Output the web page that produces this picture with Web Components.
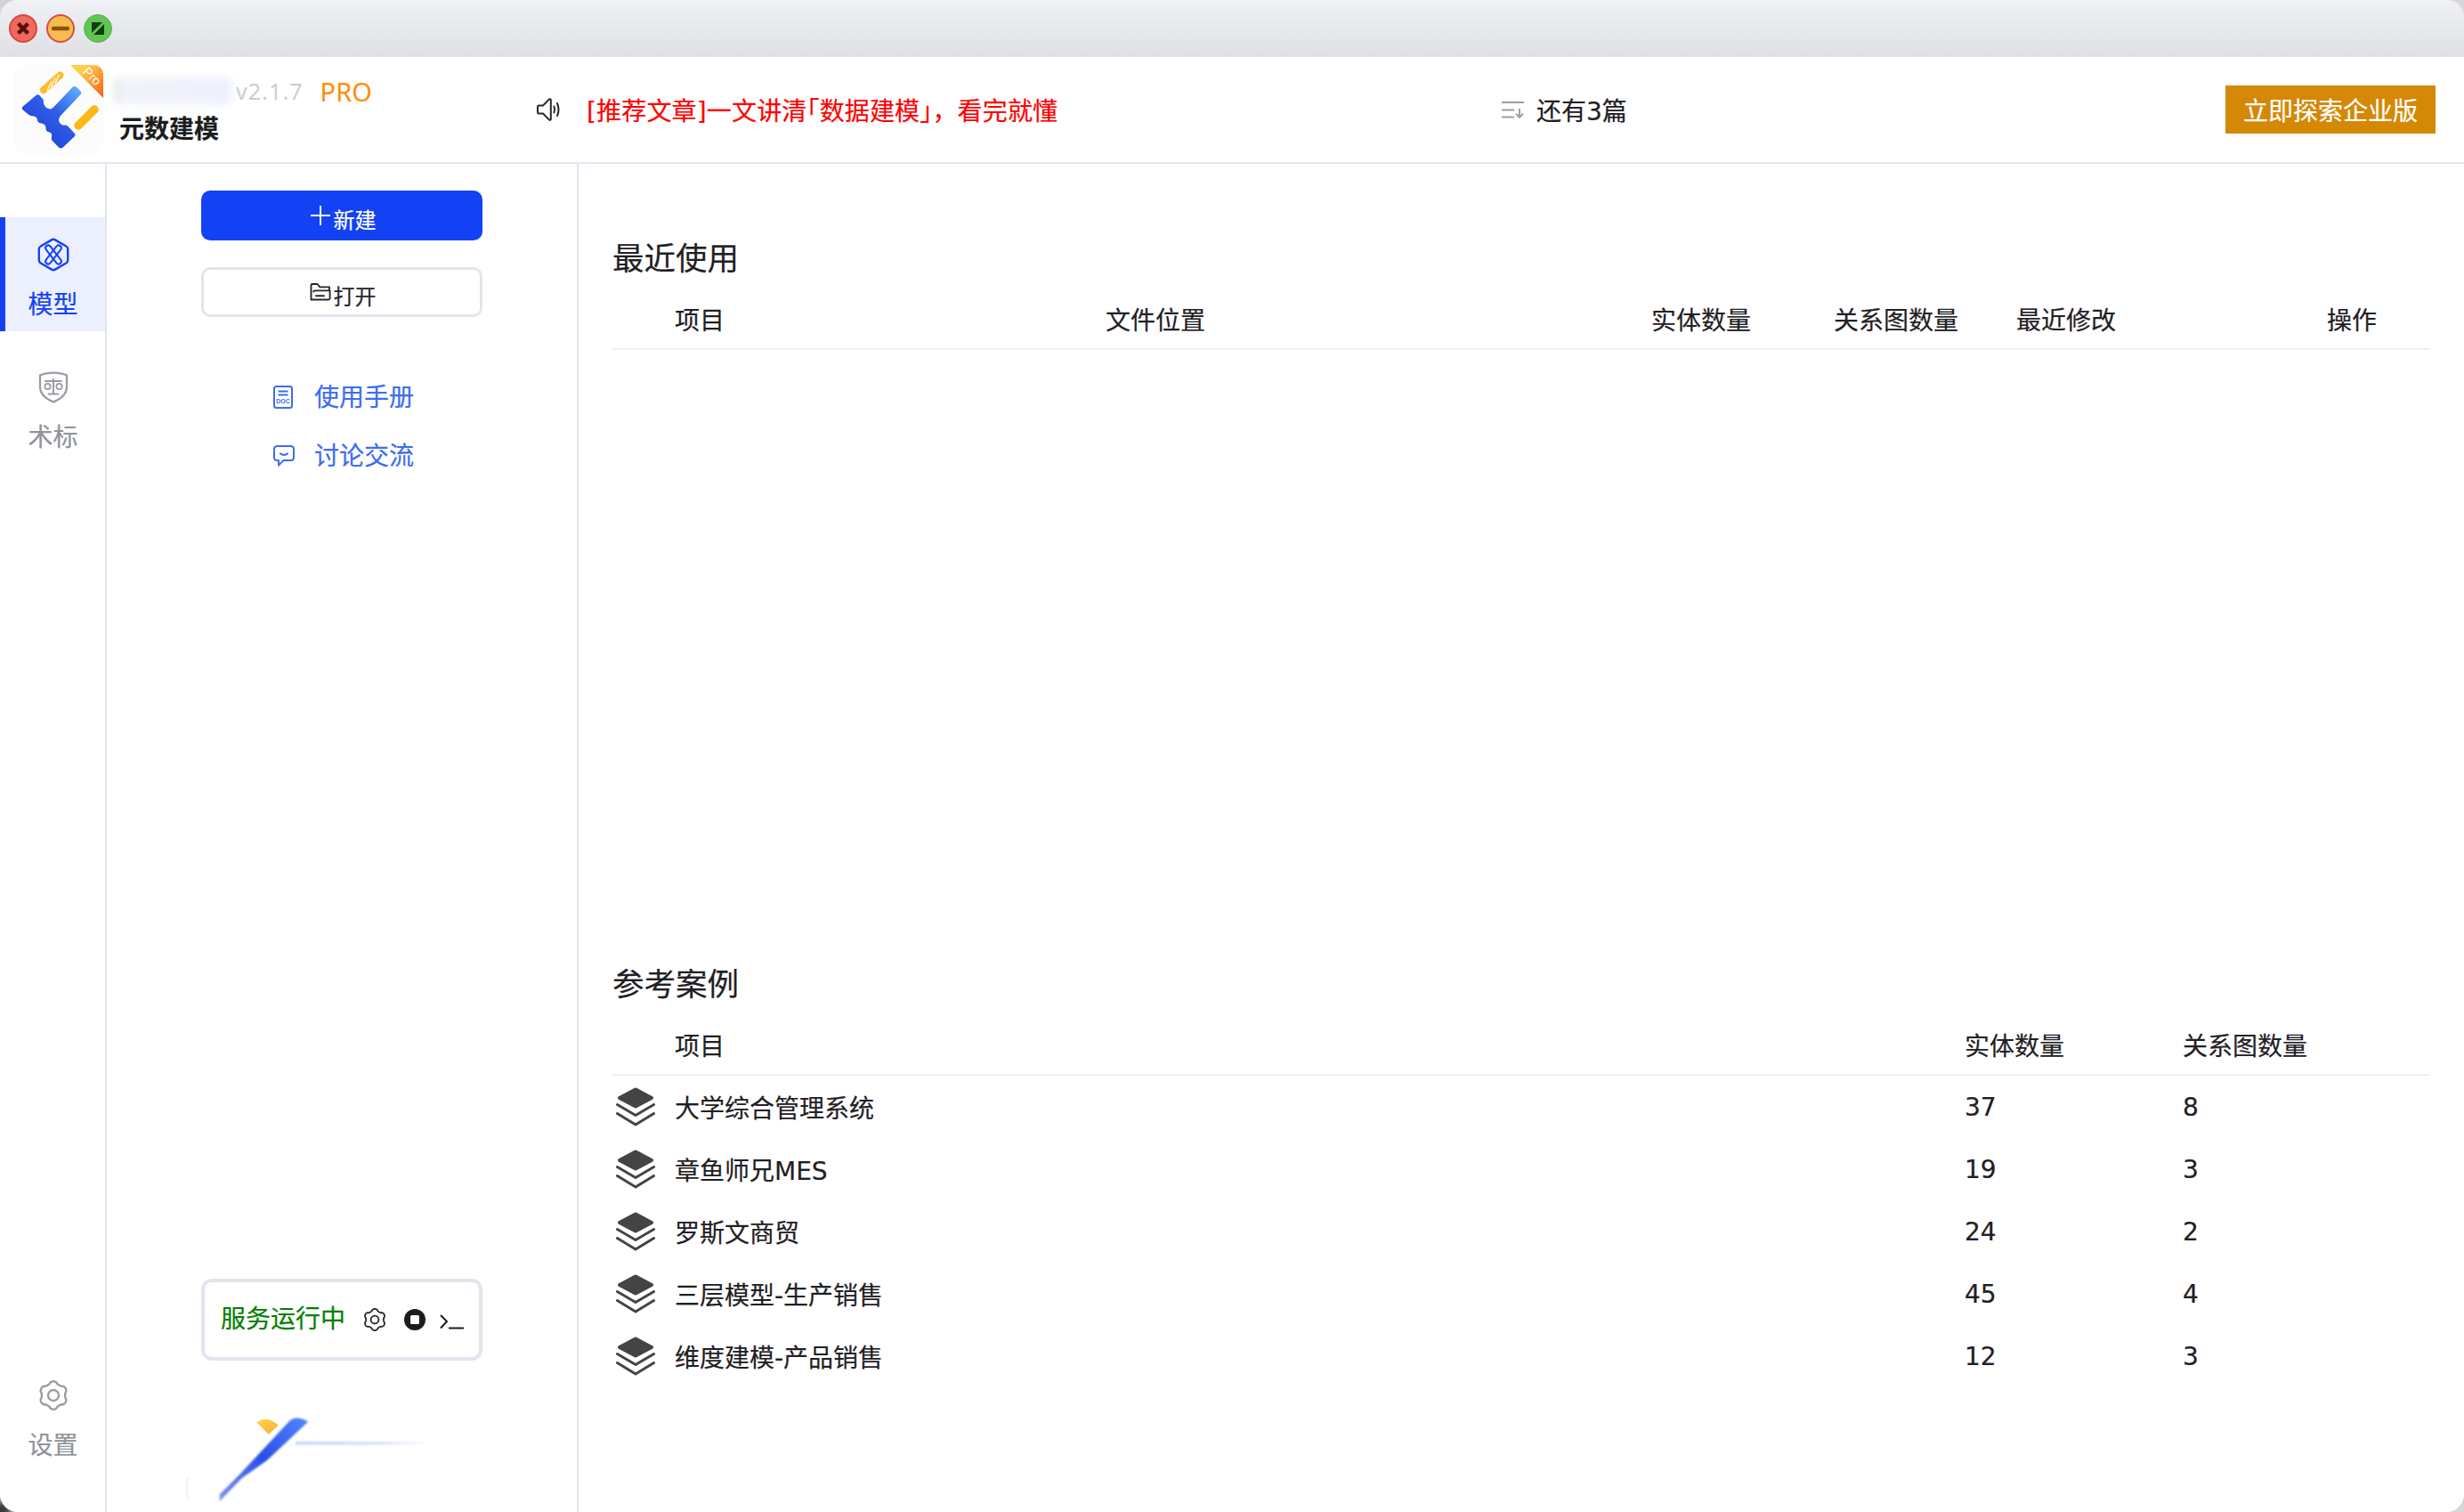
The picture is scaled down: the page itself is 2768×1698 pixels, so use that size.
<!DOCTYPE html>
<html lang="zh-CN">
<head>
<meta charset="utf-8">
<title>元数建模</title>
<style>
html,body{margin:0;height:1698px;overflow:hidden}
body{width:2768px;background:radial-gradient(circle at 0 100%,#333 0,#444 7px,#cfcfcf 18px,#d8d8d8 100%);font-family:"DejaVu Sans","Noto Sans CJK SC",sans-serif;color:#1f2024;-webkit-text-stroke:.2px}
</style>
</head>
<body>
<app-window>
  <title-bar></title-bar>
  <app-header></app-header>
  <div style="display:flex;flex:1;min-height:0">
    <nav-rail>
      <rail-item active icon="model" label="模型"></rail-item>
      <rail-item icon="shield" label="术标"></rail-item>
      <rail-item slot="end" icon="gear" label="设置"></rail-item>
    </nav-rail>
    <side-panel>
      <action-button primary icon="plus" label="新建"></action-button>
      <action-button icon="folder" label="打开"></action-button>
      <link-list>
        <link-item icon="doc" label="使用手册"></link-item>
        <link-item icon="chat" label="讨论交流"></link-item>
      </link-list>
      <service-box slot="end"></service-box>
      <panel-art slot="end"></panel-art>
    </side-panel>
    <main-area>
      <data-section heading="最近使用" style="--cols:70px 484px 613px 205px 205px 349px 116px">
        <table-row head><span></span><span>项目</span><span>文件位置</span><span>实体数量</span><span>关系图数量</span><span>最近修改</span><span>操作</span></table-row>
      </data-section>
      <data-section heading="参考案例" style="--cols:70px 1449px 245px 278px">
        <table-row head><span></span><span>项目</span><span>实体数量</span><span>关系图数量</span></table-row>
        <table-row><stack-icon></stack-icon><span>大学综合管理系统</span><span>37</span><span>8</span></table-row>
        <table-row><stack-icon></stack-icon><span>章鱼师兄MES</span><span>19</span><span>3</span></table-row>
        <table-row><stack-icon></stack-icon><span>罗斯文商贸</span><span>24</span><span>2</span></table-row>
        <table-row><stack-icon></stack-icon><span>三层模型-生产销售</span><span>45</span><span>4</span></table-row>
        <table-row><stack-icon></stack-icon><span>维度建模-产品销售</span><span>12</span><span>3</span></table-row>
      </data-section>
    </main-area>
  </div>
</app-window>
<script>
function gearPath(c,R,a){
  let d='';
  for(let i=0;i<=144;i++){
    const t=i/144*Math.PI*2, k=Math.cos(6*t), r=R*(1+a*Math.sign(k)*Math.pow(Math.abs(k),.6));
    d+=(i?'L':'M')+(c+r*Math.sin(t)).toFixed(2)+' '+(c-r*Math.cos(t)).toFixed(2);
  }
  return d+'Z';
}
const ICONS={
  model:`<svg width="36" height="38" viewBox="0 0 36 38" fill="none" stroke="#1342f5" stroke-width="2.4" stroke-linejoin="round" stroke-linecap="round"><path d="M16 2.4a4 4 0 0 1 4 0L32.2 9.5a3.6 3.6 0 0 1 2 3.2v12.6a3.6 3.6 0 0 1-2 3.2L20 35.6a4 4 0 0 1-4 0L3.8 28.5a3.6 3.6 0 0 1-2-3.2V12.7a3.6 3.6 0 0 1 2-3.2Z"/><rect x="15" y="6.5" width="6" height="25" rx="3" stroke-width="2" transform="rotate(38 18 19)"/><rect x="15" y="6.5" width="6" height="25" rx="3" stroke-width="2" transform="rotate(-38 18 19)"/></svg>`,
  shield:`<svg width="34" height="36" viewBox="0 0 34 36" fill="none" stroke="#9a9da3" stroke-width="2.3" stroke-linecap="round" stroke-linejoin="round"><path d="M17 1.6C23 1.6 28 2.6 32 4.4V17C32 26 24 31.6 17 34.4 10 31.6 2 26 2 17V4.4C6 2.6 11 1.6 17 1.6Z"/><path d="M8 11H26M17 9V25M11.5 25.5H22.5" stroke-width="2"/><circle cx="10.5" cy="17" r="3.2" stroke-width="1.8"/><circle cx="23.5" cy="17" r="3.2" stroke-width="1.8"/></svg>`,
  gear:`<svg width="34" height="34" viewBox="0 0 34 34" fill="none" stroke="#9a9da3" stroke-width="2.4" stroke-linejoin="round"><path d="${gearPath(17,14.4,.09)}"/><circle cx="17" cy="17" r="6"/></svg>`,
  plus:`<svg width="24" height="24" viewBox="0 0 24 24" stroke="#fff" stroke-width="2"><path d="M12 1V23M1 12H23"/></svg>`,
  folder:`<svg width="24" height="20" viewBox="0 0 24 20" fill="none" stroke="#26272b" stroke-width="1.9" stroke-linejoin="round" stroke-linecap="round"><path d="M1.5 18.5V2.2Q1.5 1 2.7 1H8.5L11.4 4.4H22V8M1.5 18.5H21Q22.4 18.5 22.6 17.2V8.4H5.6Q4.2 8.4 4.2 9.6M7 14.2H16"/></svg>`,
  doc:`<svg width="22" height="26" viewBox="0 0 22 26" fill="none"><rect x="1" y="1" width="20" height="24" rx="2.5" stroke="#3c6df0" stroke-width="2"/><path d="M5.5 6.5H16.5M5.5 10.5H16.5" stroke="#3c6df0" stroke-width="1.8"/><text x="11" y="20" text-anchor="middle" font-size="7" font-weight="700" font-family="Liberation Sans,sans-serif" fill="#3c6df0" style="-webkit-text-stroke:0">DOC</text></svg>`,
  chat:`<svg width="24" height="24" viewBox="0 0 24 24" fill="none" stroke="#3c6df0" stroke-width="2" stroke-linejoin="round" stroke-linecap="round"><path d="M4.5 1H19.5Q23 1 23 4.5V13.5Q23 17 19.5 17H11.5L6 22.6V17H4.5Q1 17 1 13.5V4.5Q1 1 4.5 1Z"/><path d="M8 9.4Q12 12.4 16 9.4"/></svg>`
};
const FONT=`font-family:"DejaVu Sans","Noto Sans CJK SC",sans-serif;`;
function define(name,render){
  customElements.define(name,class extends HTMLElement{
    connectedCallback(){
      if(this.shadowRoot) return;
      this.attachShadow({mode:'open'}).innerHTML=render(this);
    }
  });
}
define('app-window',()=>`<style>:host{display:flex;flex-direction:column;width:2768px;height:1698px;background:#fff;border-radius:20px;overflow:hidden}</style><slot></slot>`);
define('title-bar',()=>`<style>
:host{display:flex;align-items:center;gap:10px;height:64px;box-sizing:border-box;padding-left:10px;background:linear-gradient(#f0f1f6,#dfe0e4)}
i{display:block;width:32px;height:32px;border-radius:50%;box-sizing:border-box}
svg{display:block}
</style>
<i style="background:#ee6a5f;border:2px solid #d9453a"><svg width="28" height="28" viewBox="0 0 28 28"><path d="M8.5 8.5L19.5 19.5M19.5 8.5L8.5 19.5" stroke="#5e0e08" stroke-width="4.4"/></svg></i>
<i style="background:#f5bd4f;border:2px solid #db4c3c"><svg width="28" height="28" viewBox="0 0 28 28"><path d="M6 14H22" stroke="#8b5208" stroke-width="4.4" stroke-linecap="round"/></svg></i>
<i style="background:#61c454;border:1px solid #55b349"><svg width="30" height="30" viewBox="0 0 30 30"><path d="M8 8H20L8 20ZM22 10V22H10Z" fill="#0f3d0e"/></svg></i>`);
define('app-header',()=>`<style>
:host{display:grid;grid-template-columns:603px 1083px 1fr auto;align-items:center;height:118px;padding-right:32px;border-bottom:2px solid #e2e5ee;${FONT}font-size:28px;color:#1f2024}
.brand{display:flex;align-items:center;padding-left:16px;height:118px}
.txt{display:flex;flex-direction:column;margin-left:18px}
.top{display:flex;align-items:center;height:40px;margin-left:-6px;white-space:nowrap;font-family:"Noto Sans",sans-serif}
.mask{width:132px;height:30px;margin-right:5px;background:linear-gradient(90deg,#e4e4e6 0,#f1f3fb 8%,#edf0fc 100%);border-radius:6px;filter:blur(4px)}
.ver{font-size:25px;letter-spacing:1.1px;color:#c9cdd4;-webkit-text-stroke:0}
.pro{font-size:29px;color:#ff8c00;margin-left:19px;-webkit-text-stroke:0}
.name{line-height:42px;font-size:28px;color:#1c1d20;font-family:"Noto Sans CJK SC",sans-serif;font-weight:700}
.notice{display:flex;align-items:center;gap:28px;color:#f00;white-space:nowrap}
.notice span{letter-spacing:.16px}
.notice b{font-weight:400;font-feature-settings:"halt"}
.count{display:flex;align-items:center;gap:13px;white-space:nowrap}
.cta{display:flex;align-items:center;justify-content:center;width:236px;height:54px;background:#d58806;color:#fff;white-space:nowrap}
svg{display:block;flex:none}
</style>
<div class="brand">
  <svg width="100" height="100" viewBox="0 0 100 100">
    <defs>
      <linearGradient id="r" x1="0" y1="0" x2="1" y2="1"><stop offset=".25" stop-color="#ffcf4a"/><stop offset="1" stop-color="#f65e16"/></linearGradient>
      <linearGradient id="b" x1="1" y1="0" x2="0.2" y2="1"><stop offset="0" stop-color="#62b6ff"/><stop offset=".45" stop-color="#2f5fe8"/><stop offset="1" stop-color="#1e3cd6"/></linearGradient>
    </defs>
    <rect width="100" height="100" rx="14" fill="#fcfcfd"/>
    <path d="M63 0H88Q100 0 100 12V37Z" fill="url(#r)"/>
    <text x="0" y="0" font-size="14" font-family="Liberation Sans,sans-serif" fill="#fff" text-anchor="middle" transform="translate(84 16) rotate(45)" style="-webkit-text-stroke:0">Pro</text>
    <path d="M65.7 24.7Q68 23 70 25L74.7 29.5Q76 31 74.7 33L52 57Q49 61 50.5 64Q53 68 56.5 67.6Q59 67 61 69.5L68 77Q69 78.5 68 80L54.5 92.8Q52.3 94.4 50.2 92.8L42.3 84.4Q41 82.8 42 81Q43 77 39.5 75.6Q35.6 75 35.5 71.5Q36 67 31 65.5Q27 65.5 26 62.5Q26 57.8 21.6 57.5Q18 57.5 15.8 55.4L9.2 50Q8 48 9.5 46.7L24.5 34Q26.7 32.4 28.6 34.2L32 38Q33.5 40 33 43Q34 48.5 40.5 49.4Q42.5 49 44 47.5Z" fill="url(#b)"/>
    <path d="M33 28L51.5 11.5" stroke="#fbbf2d" stroke-width="8" stroke-linecap="round"/>
    <path d="M37 29L42 18.5M41.5 25L46 14.5M46 21L50 11" stroke="#fcfcfd" stroke-width="1.2"/>
    <path d="M90 50L72 68" stroke="#fdb813" stroke-width="9.5" stroke-linecap="round"/>
  </svg>
  <div class="txt">
    <div class="top"><span class="mask"></span><span class="ver">v2.1.7</span><span class="pro">PRO</span></div>
    <div class="name">元数建模</div>
  </div>
</div>
<div class="notice">
  <svg width="28" height="26" viewBox="0 0 28 26" fill="none" stroke="#26272b" stroke-width="2" stroke-linejoin="round" stroke-linecap="round"><path d="M2 8.5Q1 8.5 1 10V16Q1 17.5 2 17.5H7L14 24.6Q15.8 25.4 15.8 23.4V2.6Q15.8 .6 14 1.4L7 8.5Z"/><path d="M19.4 9.5Q20.8 13 19.4 16.5"/><path d="M23 6Q26 13 23 20"/></svg>
  <span>[推荐文章]一文讲清<b>「</b>数据建模<b>」</b>，看完就懂</span>
</div>
<div class="count">
  <svg width="27" height="20" viewBox="0 0 27 20" fill="none" stroke="#9a9da3" stroke-width="2"><path d="M1 2H26M1 10.5H15M1 18.5H15M21 9V18.5M17 14.8L21 18.8L25 14.8"/></svg>
  <span>还有3篇</span>
</div>
<div class="cta">立即探索企业版</div>`);
define('nav-rail',()=>`<style>
:host{display:flex;flex-direction:column;gap:21px;width:118px;flex:none;box-sizing:content-box;border-right:2px solid #e2e5ee;padding:60px 0 45px;height:calc(100% - 105px)}
.end{margin-top:auto}
</style><slot></slot><div class="end"><slot name="end"></slot></div>`);
define('rail-item',e=>{const a=e.hasAttribute('active');return `<style>
:host{display:flex;flex-direction:column;align-items:center;height:128px;box-sizing:border-box;padding-top:23px;font-size:28px;line-height:40px;${FONT}color:${a?'#1342f5':'#8f9399'};background:${a?'#ecf0fe':'transparent'};border-left:6px solid ${a?'#1342f5':'transparent'};padding-right:5px;}
.i{height:38px;display:flex;align-items:center;justify-content:center;margin-bottom:18px}
svg{display:block}
</style><div class="i">${ICONS[e.getAttribute('icon')]}</div><div>${e.getAttribute('label')}</div>`});
define('side-panel',()=>`<style>
:host{display:flex;flex-direction:column;align-items:center;flex:none;padding-top:30px;box-sizing:border-box;border-right:2px solid #e2e5ee;width:530px}
.end{margin-top:auto;display:flex;flex-direction:column;align-items:center;width:100%}
</style><slot></slot><div class="end"><slot name="end"></slot></div>`);
define('action-button',e=>{const p=e.hasAttribute('primary');return `<style>
:host{display:flex;align-items:center;justify-content:center;gap:3px;width:316px;height:56px;box-sizing:border-box;padding-left:2px;margin-bottom:30px;border-radius:10px;font-size:24px;${FONT}${p?'background:#1342f5;color:#fff;':'background:#fff;color:#26272b;border:3px solid #e1e5ee;'}}
svg{display:block;flex:none}
span{margin-top:6px}
</style>${ICONS[e.getAttribute('icon')]}<span>${e.getAttribute('label')}</span>`});
define('link-list',()=>`<style>:host{display:flex;flex-direction:column;margin-top:25px;margin-left:4px}</style><slot></slot>`);
define('link-item',e=>`<style>
:host{display:flex;align-items:center;height:66px;font-size:28px;${FONT}color:#3c6df0}
.i{width:46px;display:flex;align-items:center;justify-content:flex-start;padding-top:4px}
svg{display:block}
</style><div class="i">${ICONS[e.getAttribute('icon')]}</div><span>${e.getAttribute('label')}</span>`);
define('service-box',()=>`<style>
:host{display:flex;align-items:center;width:316px;height:92px;box-sizing:border-box;border:4px solid #e1e5ee;border-radius:12px;padding-left:18px;font-size:28px;${FONT}color:#008000;white-space:nowrap}
svg{display:block;flex:none}
span{margin-bottom:6px}
</style><span>服务运行中</span>
<svg style="margin-left:20px" width="26" height="26" viewBox="0 0 26 26" fill="none" stroke="#26272b" stroke-width="1.8" stroke-linejoin="round"><path d="${gearPath(13,11,.1)}"/><circle cx="13" cy="13" r="4.4"/></svg>
<svg style="margin-left:20px" width="24" height="24" viewBox="0 0 24 24"><circle cx="12" cy="12" r="12" fill="#1b1c20"/><rect x="7" y="7" width="10" height="10" rx="1.5" fill="#fff"/></svg>
<svg style="margin-left:16px;margin-top:4px" width="27" height="17" viewBox="0 0 27 17" fill="none" stroke="#1b1c20" stroke-width="2"><path d="M1 1L8 8L1 15.5M10 15.5H27"/></svg>`);
define('panel-art',()=>`<style>:host{display:block;width:528px;height:170px}svg{display:block}</style>
<svg width="528" height="170" viewBox="0 0 528 170">
  <defs>
    <linearGradient id="s" x1="1" y1="0" x2="0" y2="1"><stop offset="0" stop-color="#4f86ff"/><stop offset=".5" stop-color="#2a4ee8"/><stop offset="1" stop-color="#7f99ee"/></linearGradient>
    <linearGradient id="y" x1="0" y1="0" x2="1" y2="1"><stop offset="0" stop-color="#ffd84f"/><stop offset="1" stop-color="#fba93a"/></linearGradient>
    <linearGradient id="l"><stop offset="0" stop-color="#c7d4fb"/><stop offset=".65" stop-color="#dbe3fa"/><stop offset="1" stop-color="#fff"/></linearGradient>
    <filter id="f" x="-20%" y="-20%" width="140%" height="140%"><feGaussianBlur stdDeviation=".8"/></filter>
    <filter id="g" x="-5%" y="-200%" width="110%" height="500%"><feGaussianBlur stdDeviation="1"/></filter>
  </defs>
  <rect x="89" y="132" width="2" height="22" fill="#eef1fb"/>
  <path d="M205 68Q209 64 213 64.5Q220 64.5 226 68.7L180 112L151.7 132L126.7 158L126.7 150.3L150 127L175 100.3Z" fill="url(#s)" filter="url(#f)"/>
  <path d="M168.3 69.3Q180 61 192.7 72.7L181.7 82.7Z" fill="url(#y)"/>
  <rect x="212" y="91" width="150" height="3.5" fill="url(#l)" filter="url(#g)"/>
</svg>`);
define('main-area',()=>`<style>:host{display:grid;grid-template-rows:815px auto;align-content:start;flex:1;min-width:0;box-sizing:border-box;padding:82px 38px 0}</style><slot></slot>`);
define('data-section',e=>`<style>
:host{display:block;min-width:0}
h2{margin:0 0 9px;font-size:35.5px;line-height:50px;font-weight:400;${FONT}color:#1f2024}
</style><h2>${e.getAttribute('heading')}</h2><slot></slot>`);
define('table-row',e=>{const h=e.hasAttribute('head');return `<style>
:host{display:grid;grid-template-columns:var(--cols);align-items:center;height:${h?66:70}px;font-size:28px;${FONT}color:#1f2024;white-space:nowrap;${h?'border-bottom:2px solid #f0f0f0;':''}}
</style><slot></slot>`});
define('stack-icon',()=>`<style>:host{display:block;width:44px;height:44px;margin-left:4px}svg{display:block}</style>
<svg width="44" height="44" viewBox="0 0 44 44"><path d="M20 1.2Q22 0 24 1.2L41.4 10.6Q43 12 41.4 13.4L24 22.8Q22 24 20 22.8L2.6 13.4Q1 12 2.6 10.6Z" fill="#444"/><path d="M1.5 19.5L22 31.5L42.5 19.5M1.5 29.5L22 42L42.5 29.5" fill="none" stroke="#444" stroke-width="3" stroke-linecap="round" stroke-linejoin="round"/></svg>`);
</script>
</body>
</html>
